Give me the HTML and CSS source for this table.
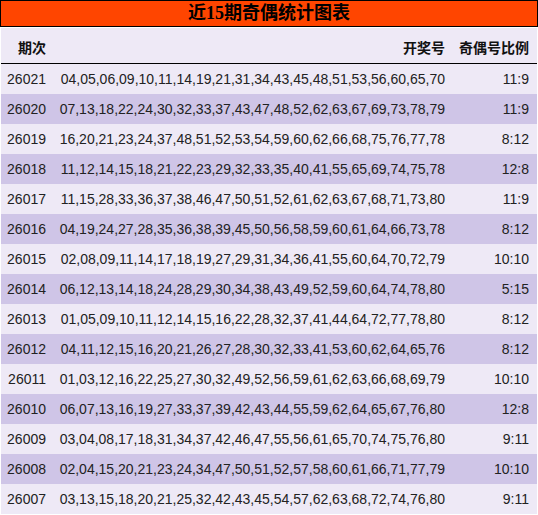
FILE: index.html
```html
<!DOCTYPE html>
<html lang="zh">
<head>
<meta charset="utf-8">
<title>近15期奇偶统计图表</title>
<link rel="stylesheet" href="styles.css">
</head>
<body>
<div class="title">近15期奇偶统计图表</div>
<div class="wrap">
<table class="stats">
<colgroup><col class="c1"><col class="c2"><col class="c3"></colgroup>
<thead>
<tr><th>期次</th><th>开奖号</th><th>奇偶号比例</th></tr>
</thead>
<tbody>
<tr><td>26021</td><td>04,05,06,09,10,11,14,19,21,31,34,43,45,48,51,53,56,60,65,70</td><td>11:9</td></tr>
<tr><td>26020</td><td>07,13,18,22,24,30,32,33,37,43,47,48,52,62,63,67,69,73,78,79</td><td>11:9</td></tr>
<tr><td>26019</td><td>16,20,21,23,24,37,48,51,52,53,54,59,60,62,66,68,75,76,77,78</td><td>8:12</td></tr>
<tr><td>26018</td><td>11,12,14,15,18,21,22,23,29,32,33,35,40,41,55,65,69,74,75,78</td><td>12:8</td></tr>
<tr><td>26017</td><td>11,15,28,33,36,37,38,46,47,50,51,52,61,62,63,67,68,71,73,80</td><td>11:9</td></tr>
<tr><td>26016</td><td>04,19,24,27,28,35,36,38,39,45,50,56,58,59,60,61,64,66,73,78</td><td>8:12</td></tr>
<tr><td>26015</td><td>02,08,09,11,14,17,18,19,27,29,31,34,36,41,55,60,64,70,72,79</td><td>10:10</td></tr>
<tr><td>26014</td><td>06,12,13,14,18,24,28,29,30,34,38,43,49,52,59,60,64,74,78,80</td><td>5:15</td></tr>
<tr><td>26013</td><td>01,05,09,10,11,12,14,15,16,22,28,32,37,41,44,64,72,77,78,80</td><td>8:12</td></tr>
<tr><td>26012</td><td>04,11,12,15,16,20,21,26,27,28,30,32,33,41,53,60,62,64,65,76</td><td>8:12</td></tr>
<tr><td>26011</td><td>01,03,12,16,22,25,27,30,32,49,52,56,59,61,62,63,66,68,69,79</td><td>10:10</td></tr>
<tr><td>26010</td><td>06,07,13,16,19,27,33,37,39,42,43,44,55,59,62,64,65,67,76,80</td><td>12:8</td></tr>
<tr><td>26009</td><td>03,04,08,17,18,31,34,37,42,46,47,55,56,61,65,70,74,75,76,80</td><td>9:11</td></tr>
<tr><td>26008</td><td>02,04,15,20,21,23,24,34,47,50,51,52,57,58,60,61,66,71,77,79</td><td>10:10</td></tr>
<tr><td>26007</td><td>03,13,15,18,20,21,25,32,42,43,45,54,57,62,63,68,72,74,76,80</td><td>9:11</td></tr>
</tbody>
</table>
</div>
</body>
</html>
```
FILE: styles.css
```css
html, body {
  margin: 0;
  padding: 0;
  background: #ffffff;
}
body {
  width: 538px;
  font-family: "Liberation Sans", "Noto Sans CJK SC", sans-serif;
}
.title {
  box-sizing: border-box;
  width: 538px;
  height: 27px;
  border: 1px solid #000;
  background: #ff4500;
  color: #000;
  font-family: "Liberation Serif", "Noto Sans CJK SC", serif;
  font-weight: bold;
  font-size: 18px;
  line-height: 25px;
  text-align: center;
}
.wrap {
  padding: 1px 1px 0 1px;
}
.stats {
  width: 536px;
  table-layout: fixed;
  border-collapse: collapse;
  border-spacing: 0;
  background: #eee9f6;
  font-size: 14px;
}
.c1 { width: 53px; }
.c2 { width: 399px; }
.c3 { width: 84px; }
.stats th,
.stats td {
  box-sizing: border-box;
  padding: 0 8px 0 0;
  text-align: right;
  white-space: nowrap;
  overflow: hidden;
}
.stats th {
  height: 35px;
  padding-top: 3px;
  font-weight: bold;
  color: #111;
  border-bottom: 1px solid #000;
}
.stats td {
  height: 30px;
  color: #222;
}
.stats tbody tr:first-child td {
  height: 31px;
  padding-top: 1px;
}
.stats tbody tr:nth-child(even) {
  background: #cfc5e7;
}
```
